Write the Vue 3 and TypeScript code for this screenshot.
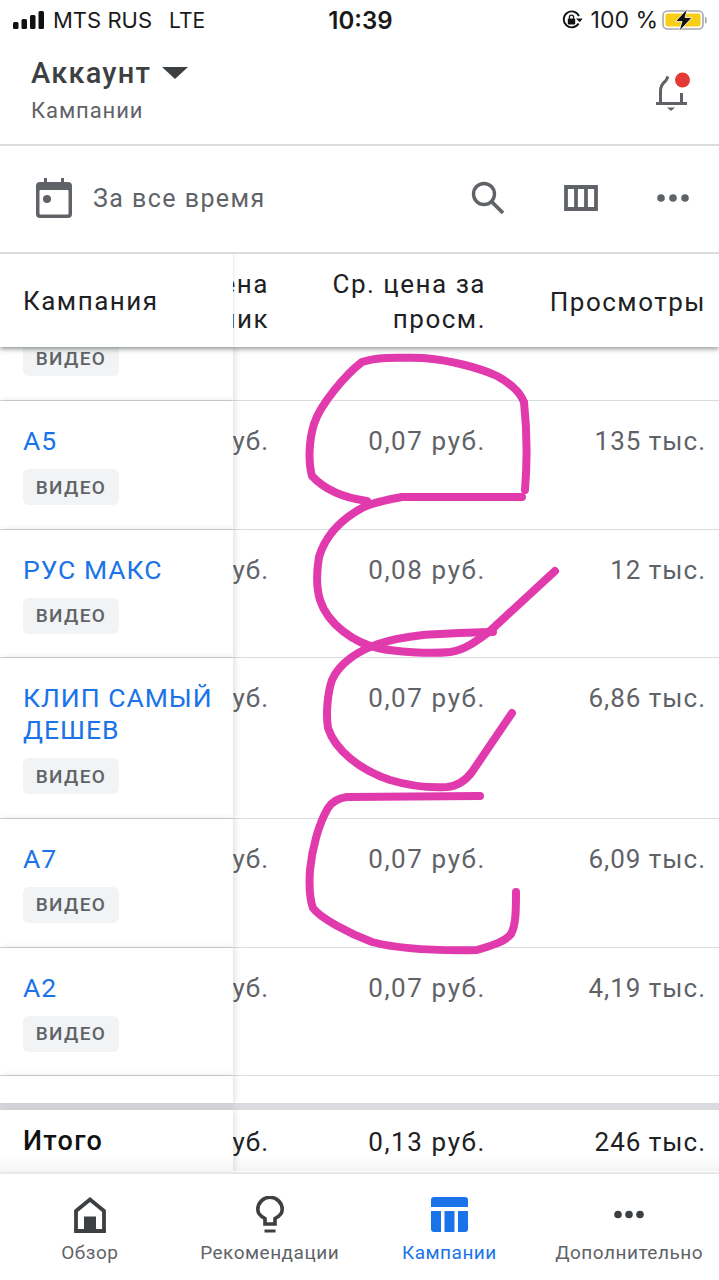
<template>
  <div class="page">
    <div class="status-bar">
      <div class="status-left">
        <svg class="signal" width="32" height="18" viewBox="0 0 32 18">
          <rect x="0" y="11" width="5.5" height="7" rx="1.5" />
          <rect x="8.5" y="8" width="5.5" height="10" rx="1.5" />
          <rect x="17" y="4" width="5.5" height="14" rx="1.5" />
          <rect x="25.5" y="0" width="5.5" height="18" rx="1.5" />
        </svg>
        <span class="carrier">MTS RUS</span>
        <span class="carrier lte">LTE</span>
      </div>
      <div class="clock">10:39</div>
      <div class="status-right">
        <svg class="rotation" width="20" height="20" viewBox="0 0 20 20">
          <path d="M16.6 13.5A8 8 0 1 1 17 6" fill="none" stroke="#111" stroke-width="1.9" />
          <path d="M14 8.6h6.4l-2.6 3.6z" fill="#111" />
          <rect x="5.8" y="8.6" width="7.4" height="6" rx="1" fill="#111" />
          <path d="M7.4 8.8V7.2a2.1 2.1 0 0 1 4.2 0v1.6" fill="none" stroke="#111" stroke-width="1.3" />
        </svg>
        <span class="percent">100 %</span>
        <svg width="46" height="24" viewBox="0 0 46 24">
          <rect x="1" y="3" width="40" height="18" rx="4.5" fill="none" stroke="#a8a8a8" stroke-width="1.6" />
          <rect x="3.5" y="5.5" width="35" height="13" rx="2.5" fill="#f7cd15" />
          <rect x="43" y="9" width="1.6" height="6.5" rx=".8" fill="#a8a8a8" />
          <path d="M25.5 0.5 13.5 13.5h6.5l-3 10 13-14h-7z" fill="#111" stroke="#fff" stroke-width=".8" />
        </svg>
      </div>
    </div>

    <header class="app-header">
      <div>
        <div class="account">
          <span>Аккаунт</span>
          <span class="caret"></span>
        </div>
        <div class="subtitle">Кампании</div>
      </div>
      <svg class="bell" width="36" height="42" viewBox="0 0 36 42">
        <path d="M1 31.5h31" stroke="#5f6368" stroke-width="3" fill="none" />
        <path d="M5.5 31V19c0-5 1.500-7 4.500-9.500 1.500-1.300 2-3 3-5" stroke="#5f6368" stroke-width="3" fill="none" />
        <path d="M26.500 21v10" stroke="#5f6368" stroke-width="3" fill="none" />
        <path d="M12 35.500h8l-4 3.500z" fill="#5f6368" />
        <circle cx="27.500" cy="8" r="7.500" fill="#e53935" />
      </svg>
    </header>

    <div class="toolbar">
      <div class="range">
        <svg width="36" height="40" viewBox="0 0 36 40">
          <path d="M8 0h3v4h14V0h3v4h4a4 4 0 0 1 4 4v28a4 4 0 0 1-4 4H4a4 4 0 0 1-4-4V8a4 4 0 0 1 4-4h4z" fill="#5f6368" />
          <rect x="3.500" y="12" width="29" height="24.500" rx="1" fill="#fff" />
          <circle cx="11" cy="21" r="4" fill="#5f6368" />
        </svg>
        <span>За все время</span>
      </div>
      <div class="tools">
        <svg width="34" height="34" viewBox="0 0 34 34">
          <circle cx="13" cy="13" r="10.500" fill="none" stroke="#5f6368" stroke-width="3.400" />
          <path d="M20.500 20.500 32 32" stroke="#5f6368" stroke-width="3.800" fill="none" />
        </svg>
        <svg width="34" height="26" viewBox="0 0 34 26">
          <path d="M2 2h30v22H2zM12 2v22M22 2v22" fill="none" stroke="#5f6368" stroke-width="3.800" />
        </svg>
        <svg width="32" height="8" viewBox="0 0 32 8">
          <circle cx="4" cy="4" r="3.800" fill="#5f6368" />
          <circle cx="16" cy="4" r="3.800" fill="#5f6368" />
          <circle cx="28" cy="4" r="3.800" fill="#5f6368" />
        </svg>
      </div>
    </div>

    <section class="table">
      <div class="row head">
        <div class="sticky head-name">Кампания</div>
        <div class="cell clip"><span>Ср. цена<br />за клик</span></div>
        <div class="cell"><span>Ср. цена за<br />просм.</span></div>
        <div class="cell"><span>Просмотры</span></div>
      </div>

      <div class="row partial">
        <div class="sticky partial-name"><span class="badge">ВИДЕО</span></div>
        <div class="cell clip"></div>
        <div class="cell"></div>
        <div class="cell"></div>
      </div>

      <div class="row body-row" v-for="row in rows" :key="row.name">
        <div class="sticky">
          <div class="name">{{ row.name }}</div>
          <span class="badge">ВИДЕО</span>
        </div>
        <div class="cell clip"><span>0,10 руб.</span></div>
        <div class="cell cost"><span>{{ row.cost }}</span></div>
        <div class="cell"><span>{{ row.views }}</span></div>
      </div>

      <div class="row filler">
        <div class="sticky"></div>
      </div>
      <div class="divider"></div>

      <div class="row total">
        <div class="sticky total-name">Итого</div>
        <div class="cell clip"><span>0,10 руб.</span></div>
        <div class="cell cost"><span>0,13 руб.</span></div>
        <div class="cell"><span>246 тыс.</span></div>
      </div>

      <!-- маркер поверх скриншота -->
      <svg class="scribble" width="719" height="1280" viewBox="0 0 719 1280">
        <path v-for="(d, i) in scribbles" :key="i" :d="d" />
      </svg>
    </section>

    <nav class="tabs">
      <div class="tab">
        <svg width="32" height="34" viewBox="0 0 32 34">
          <path d="M2 34V13.500L16 2l14 11.500V34z" fill="none" stroke="#3c4043" stroke-width="3.800" />
          <path d="M10 34V19h12v15zM0 31.500h32V34H0z" fill="#3c4043" />
        </svg>
        <span>Обзор</span>
      </div>
      <div class="tab">
        <svg width="28" height="37" viewBox="0 0 28 37">
          <path d="M9 28v-5.500C4 20 1.800 17 1.800 13.500a12.200 12.200 0 0 1 24.400 0c0 3.500-2.200 6.500-7.200 9V28z" fill="none" stroke="#3c4043" stroke-width="3.600" />
          <path d="M8.500 33.500h11v3h-11z" fill="#3c4043" />
        </svg>
        <span>Рекомендации</span>
      </div>
      <div class="tab active">
        <svg width="37" height="35" viewBox="0 0 37 35">
          <path d="M3 0h31a3 3 0 0 1 3 3v7H0V3a3 3 0 0 1 3-3zM0 14h10v21H3a3 3 0 0 1-3-3zM13.500 14h10v21h-10zM27 14h10v18a3 3 0 0 1-3 3h-7z" fill="#1a73e8" />
        </svg>
        <span>Кампании</span>
      </div>
      <div class="tab">
        <svg width="32" height="35" viewBox="0 0 32 35">
          <circle cx="5" cy="17.500" r="3.800" fill="#3c4043" />
          <circle cx="16" cy="17.500" r="3.800" fill="#3c4043" />
          <circle cx="27" cy="17.500" r="3.800" fill="#3c4043" />
        </svg>
        <span>Дополнительно</span>
      </div>
    </nav>
  </div>
</template>

<script setup lang="ts">
interface CampaignRow {
  name: string
  cost: string
  views: string
}

const rows: CampaignRow[] = [
  { name: 'А5', cost: '0,07 руб.', views: '135 тыс.' },
  { name: 'РУС МАКС', cost: '0,08 руб.', views: '12 тыс.' },
  { name: 'КЛИП САМЫЙ ДЕШЕВ', cost: '0,07 руб.', views: '6,86 тыс.' },
  { name: 'А7', cost: '0,07 руб.', views: '6,09 тыс.' },
  { name: 'А2', cost: '0,07 руб.', views: '4,19 тыс.' }
]

// координаты снимались с экрана, svg начинается от верха страницы
const scribbles = [
  'M367 501C345 498 325 490 312 476C308 462 309 440 314 424C320 405 345 375 362 362C380 356 405 358 423 358C450 360 480 368 497 376C510 383 520 392 524 402C527 430 527 465 525 490',
  'M522 497L402 497C385 500 372 503 362 508C340 520 325 537 319 557C316 575 317 590 320 600C328 625 355 643 378 648C395 652 430 654 450 652C465 650 478 640 490 631L555 571',
  'M493 632C470 632 440 634 423 635C405 637 390 640 378 644C360 650 340 662 332 680C327 695 326 715 328 728C335 750 360 770 390 780C410 786 430 788 447 787C458 786 466 780 472 772L512 713',
  'M480 796L347 797C338 798 332 802 328 808C318 825 312 850 310 870C309 885 310 900 313 908C320 918 350 934 372 942C395 948 430 951 477 950C490 946 505 942 511 934C516 925 516 910 516 892'
]
</script>

<style>
html,
body {
  margin: 0;
  background: #fff;
}
</style>

<style scoped>
.page {
  position: relative;
  width: 719px;
  height: 1280px;
  display: flex;
  flex-direction: column;
  overflow: hidden;
  background: #fff;
  font-family: Roboto, "Noto Sans", sans-serif;
}

.status-bar {
  height: 40px;
  flex-shrink: 0;
  display: grid;
  grid-template-columns: 1fr auto 1fr;
  align-items: center;
  padding: 0 11px 0 13px;
  color: #1a1a1a;
  font-family: Inter, Roboto, sans-serif;
}

.status-left {
  display: flex;
  align-items: center;
  gap: 8px;
  font-size: 22px;
  white-space: nowrap;
}

.signal {
  fill: #111;
}

.lte {
  margin-left: 9px;
  font-size: 21px;
}

.clock {
  font-size: 24px;
  font-weight: 600;
}

.status-right {
  display: flex;
  align-items: center;
  justify-content: flex-end;
  gap: 9px;
  font-size: 23px;
  white-space: nowrap;
}

.percent {
  margin-right: -5px;
}

.app-header {
  height: 106px;
  flex-shrink: 0;
  display: flex;
  justify-content: space-between;
  box-sizing: border-box;
  padding: 15px 28px 0 31px;
  border-bottom: 2px solid #dadce0;
}

.account {
  display: flex;
  align-items: center;
  gap: 11px;
  height: 36px;
  font-size: 29px;
  font-weight: 500;
  letter-spacing: 1.2px;
  color: #3c4043;
}

.caret {
  width: 0;
  height: 0;
  border-left: 13px solid transparent;
  border-right: 13px solid transparent;
  border-top: 12px solid #3c4043;
}

.subtitle {
  margin-top: 5px;
  font-size: 22px;
  line-height: 30px;
  letter-spacing: 0.9px;
  color: #5f6368;
}

.bell {
  margin-top: 17px;
}

.toolbar {
  height: 108px;
  flex-shrink: 0;
  box-sizing: border-box;
  display: flex;
  align-items: center;
  justify-content: space-between;
  padding: 0 30px 2px 36px;
  border-bottom: 2px solid #dadce0;
}

.range {
  display: flex;
  align-items: center;
  gap: 21px;
  font-size: 25px;
  letter-spacing: 1.45px;
  color: #5f6368;
}

.tools {
  display: flex;
  align-items: center;
  gap: 59px;
}

.table {
  flex: 1;
  min-height: 0;
  overflow: hidden;
}

.row {
  display: grid;
  grid-template-columns: 233px 36px 217px 220px;
  padding-right: 13px;
  border-bottom: 1px solid #dadce0;
  font-size: 26px;
  letter-spacing: 1px;
  color: #5f6368;
}

.sticky {
  position: relative;
  z-index: 1;
  box-sizing: border-box;
  padding-left: 23px;
  background: #fff;
  box-shadow: 2px 0 6px rgba(60, 64, 67, 0.16);
}

.cell {
  display: flex;
  justify-content: flex-end;
  overflow: hidden;
  white-space: nowrap;
  line-height: 32px;
  padding-top: 24px;
}

.cost {
  letter-spacing: 1.6px;
}

.head {
  position: relative;
  z-index: 3;
  height: 93px;
  box-sizing: border-box;
  border-bottom: 0;
  background: #fff;
  color: #202124;
  letter-spacing: 1.5px;
  box-shadow: 0 2px 5px rgba(60, 64, 67, 0.55);
}

.head .cell {
  align-items: center;
  padding-top: 3px;
  line-height: 35px;
  text-align: right;
}

.head-name {
  display: flex;
  align-items: center;
  box-shadow: 1px 0 2px rgba(60, 64, 67, 0.12);
}

.partial {
  height: 54px;
  box-sizing: border-box;
}

.partial-name {
  display: flex;
  align-items: flex-end;
  padding-bottom: 24px;
  height: 53px;
}

.body-row {
  box-sizing: border-box;
}

.body-row .sticky {
  padding-top: 24px;
  padding-bottom: 23.65px;
}

.name {
  padding-right: 12px;
  font-size: 26.5px;
  line-height: 32px;
  letter-spacing: 1px;
  color: #1a73e8;
  margin-bottom: 12px;
}

.badge {
  display: flex;
  align-items: center;
  justify-content: center;
  width: 96px;
  height: 36px;
  flex-shrink: 0;
  border-radius: 6px;
  background: #f1f3f4;
  font-size: 19px;
  font-weight: 500;
  letter-spacing: 1.4px;
  color: #5f6368;
}

.filler {
  height: 27px;
  box-sizing: border-box;
  border-bottom: 0;
}

.divider {
  height: 7px;
  background: #d9dbe0;
}

.total {
  height: 61px;
  box-sizing: border-box;
  border-bottom: 0;
  color: #202124;
  background: linear-gradient(#fff 75%, #f4f4f4);
}

.total .cell {
  padding-top: 16px;
}

.total-name {
  display: flex;
  align-items: center;
  padding-top: 1px;
  font-size: 27px;
  font-weight: 500;
  letter-spacing: 1.3px;
  color: #111;
  background: linear-gradient(#fff 75%, #f6f6f6);
}

.scribble {
  position: absolute;
  top: 0;
  left: 0;
  z-index: 4;
  pointer-events: none;
  fill: none;
  stroke: #e03aad;
  stroke-width: 8;
  stroke-linecap: round;
  stroke-linejoin: round;
}

.tabs {
  position: relative;
  z-index: 3;
  height: 108px;
  flex-shrink: 0;
  box-sizing: border-box;
  display: grid;
  grid-template-columns: repeat(4, 1fr);
  border-top: 2px solid #e8e8e8;
  background: #fff;
}

.tab {
  display: flex;
  flex-direction: column;
  align-items: center;
  padding-top: 22px;
  font-size: 19px;
  letter-spacing: 0.5px;
  white-space: nowrap;
  color: #5f6368;
}

.tab svg {
  height: 37px;
  margin-bottom: 8px;
}

.tab.active {
  color: #1a73e8;
}
</style>
